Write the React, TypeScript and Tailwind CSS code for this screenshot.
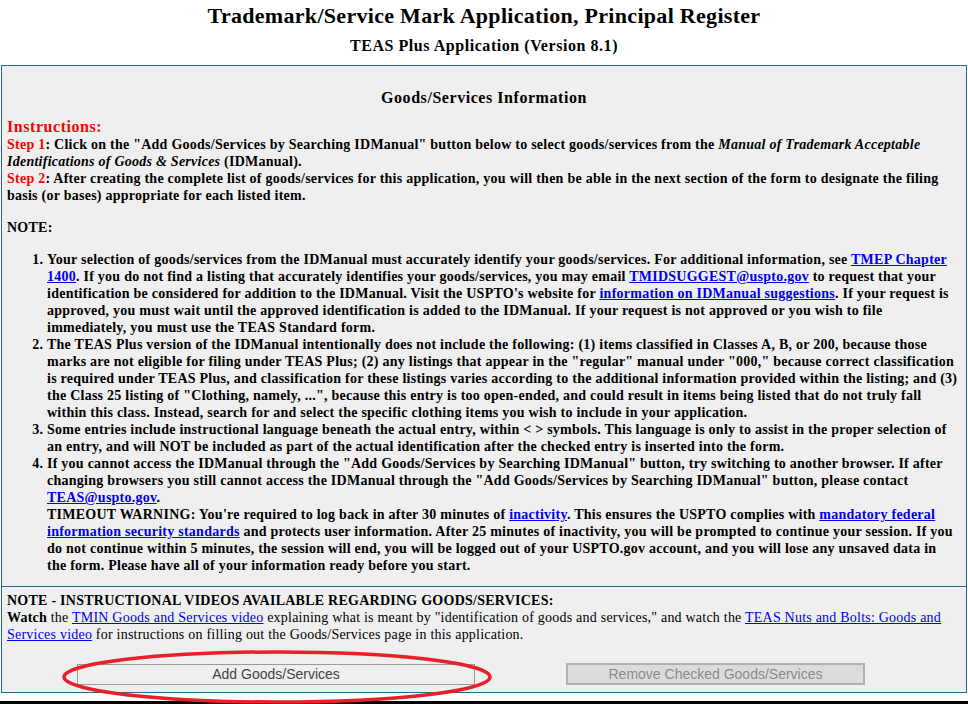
import React from "react";

const linkCls = "text-[#0000ee] underline";

export default function App() {
  return (
    <div className="w-[968px] h-[704px] overflow-hidden bg-white text-black font-['Liberation_Serif','Times_New_Roman',serif]">
      {/* Header */}
      <div className="text-center pt-[3px]">
        <h1 className="text-[22px] font-bold leading-[26px] tracking-[0.3px]">Trademark/Service Mark Application, Principal Register</h1>
        <h2 className="text-[16px] font-bold leading-[20px] mt-[7px] tracking-[0.55px]">TEAS Plus Application (Version 8.1)</h2>
      </div>

      {/* Main box */}
      <div className="relative mt-[9px] mx-[1px] border border-[#24689a] bg-[#efefef]">
        <div className="border-b border-[#24689a] px-[5px] pb-[12px]">
          <h3 className="text-center text-[16px] font-bold leading-[20px] pt-[22px] tracking-[0.55px]">Goods/Services Information</h3>

          <div className="mt-[9px] text-[14px] font-bold leading-[17px] tracking-[0.25px]">
            <div className="text-[16px] leading-[19px] text-[#ff0000] tracking-[0.55px]">Instructions:</div>
            <p>
              <span className="text-[#ff0000]">Step 1</span>: Click on the "Add Goods/Services by Searching IDManual" button below to select goods/services from the{" "}
              <i>Manual of Trademark Acceptable Identifications of Goods &amp; Services</i> (IDManual).
            </p>
            <p>
              <span className="text-[#ff0000]">Step 2</span>: After creating the complete list of goods/services for this application, you will then be able in the next section of the form to designate the filing basis (or bases) appropriate for each listed item.
            </p>

            <p className="mt-[15px]">NOTE:</p>

            <ol className="list-decimal pl-[40px] pr-[3px] mt-[15px]">
              <li>
                Your selection of goods/services from the IDManual must accurately identify your goods/services. For additional information, see{" "}
                <a className={linkCls}>TMEP Chapter 1400</a>. If you do not find a listing that accurately identifies your goods/services, you may email{" "}
                <a className={linkCls}>TMIDSUGGEST@uspto.gov</a> to request that your identification be considered for addition to the IDManual. Visit the USPTO's website for{" "}
                <a className={linkCls}>information on IDManual suggestions</a>. If your request is approved, you must wait until the approved identification is added to the IDManual. If your request is not approved or you wish to file immediately, you must use the TEAS Standard form.
              </li>
              <li>
                The TEAS Plus version of the IDManual intentionally does not include the following: (1) items classified in Classes A, B, or 200, because those marks are not eligible for filing under TEAS Plus; (2) any listings that appear in the "regular" manual under "000," because correct classification is required under TEAS Plus, and classification for these listings varies according to the additional information provided within the listing; and (3) the Class 25 listing of "Clothing, namely, ...", because this entry is too open-ended, and could result in items being listed that do not truly fall within this class. Instead, search for and select the specific clothing items you wish to include in your application.
              </li>
              <li>
                Some entries include instructional language beneath the actual entry, within &lt; &gt; symbols. This language is only to assist in the proper selection of an entry, and will NOT be included as part of the actual identification after the checked entry is inserted into the form.
              </li>
              <li>
                If you cannot access the IDManual through the "Add Goods/Services by Searching IDManual" button, try switching to another browser. If after changing browsers you still cannot access the IDManual through the "Add Goods/Services by Searching IDManual" button, please contact{" "}
                <a className={linkCls}>TEAS@uspto.gov</a>.
                <br />
                TIMEOUT WARNING: You're required to log back in after 30 minutes of <a className={linkCls}>inactivity</a>. This ensures the USPTO complies with{" "}
                <a className={linkCls}>mandatory federal information security standards</a> and protects user information. After 25 minutes of inactivity, you will be prompted to continue your session. If you do not continue within 5 minutes, the session will end, you will be logged out of your USPTO.gov account, and you will lose any unsaved data in the form. Please have all of your information ready before you start.
              </li>
            </ol>
          </div>
        </div>

        <div className="px-[5px] pt-[5px] pb-[7px] text-[14px] leading-[17px] tracking-[0.22px]">
          <p className="font-bold tracking-[0.25px]">NOTE - INSTRUCTIONAL VIDEOS AVAILABLE REGARDING GOODS/SERVICES:</p>
          <p>
            <b>Watch</b> the <a className={linkCls}>TMIN Goods and Services video</a> explaining what is meant by "identification of goods and services," and watch the{" "}
            <a className={linkCls}>TEAS Nuts and Bolts: Goods and Services video</a> for instructions on filling out the Goods/Services page in this application.
          </p>

          <div className="flex items-center mt-[20px] font-['Liberation_Sans',Arial,sans-serif] text-[14px] tracking-normal">
            <button className="ml-[70px] w-[398px] h-[21px] border border-[#9a9a9a] bg-[#efefef] text-[#444] leading-[19px]">
              Add Goods/Services
            </button>
            <button disabled className="ml-[91px] w-[299px] h-[22px] border-2 border-[#b0b0b0] bg-[#dcdcdc] text-[#8a8a8a] leading-[18px]">
              Remove Checked Goods/Services
            </button>
          </div>
        </div>

        {/* Red highlight ellipse */}
        <svg className="absolute left-[58px] top-[582px] pointer-events-none" width="436" height="60" viewBox="0 0 436 60">
          <ellipse cx="217" cy="29" rx="213" ry="25" fill="none" stroke="#e8202a" strokeWidth="3.5" />
        </svg>
      </div>

      <div className="mt-[8px] h-[3px] bg-black" />
    </div>
  );
}
